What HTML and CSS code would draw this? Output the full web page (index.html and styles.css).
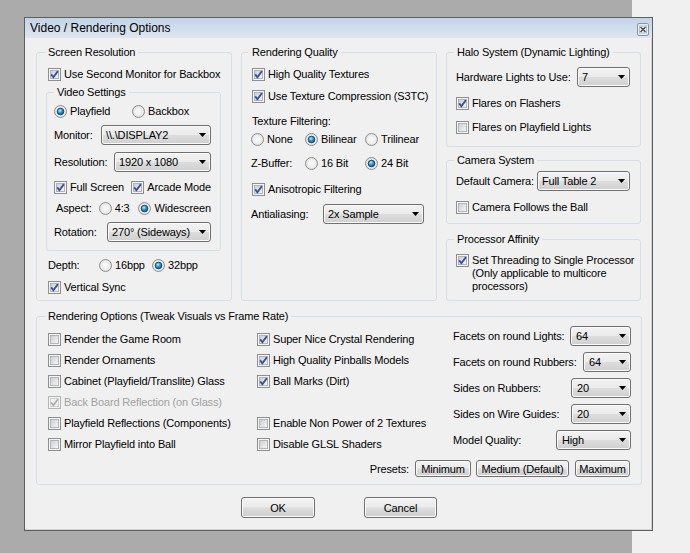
FILE: index.html
```html
<!DOCTYPE html>
<html>
<head>
<meta charset="utf-8">
<title>Video / Rendering Options</title>
<link rel="stylesheet" href="styles.css">
</head>
<body>
<svg class="defs" aria-hidden="true"><defs>
<linearGradient id="cbIn" x1="0" y1="0" x2="1" y2="1"><stop offset="0" stop-color="#c9ccd0"/><stop offset="1" stop-color="#f8f8f8"/></linearGradient>
<radialGradient id="rbIn" cx=".5" cy=".5" r=".6"><stop offset="0" stop-color="#fbfbfb"/><stop offset=".6" stop-color="#ececec"/><stop offset="1" stop-color="#c9cbce"/></radialGradient>
<radialGradient id="rbDot" cx=".4" cy=".35" r=".7"><stop offset="0" stop-color="#b5f0ff"/><stop offset=".45" stop-color="#2ba3e6"/><stop offset="1" stop-color="#0a4a86"/></radialGradient>
</defs></svg>
<div class="desktop">
  <div class="desk-gray"></div>
  <div class="desk-light"></div>
  <div class="dialog">
    <div class="titlebar">
      <span class="title">Video / Rendering Options</span>
      <svg class="close" viewBox="0 0 12 13"><rect x=".5" y=".5" width="11" height="12" rx="1.5" fill="#e8edf3" stroke="#8994a3"/><rect x="2.5" y="3" width="7" height="7" fill="#f4f6f9" stroke="#b3bcc7"/><path d="M3.5 4 8.5 9M8.5 4 3.5 9" stroke="#3e4754" stroke-width="1.4"/></svg>
    </div>
    <div class="client">
      <div class="top">
        <div class="group screen">
          <span class="legend">Screen Resolution</span>
          <label class="opt"><svg class="cb" viewBox="0 0 13 13"><rect x=".5" y=".5" width="12" height="12" fill="#f6f6f6" stroke="#8e8f8f"/><rect x="2.5" y="2.5" width="8" height="8" fill="url(#cbIn)" stroke="#b1b5b9"/><path d="M3.2 6.4 5.4 9.3 9.9 3.1" fill="none" stroke="#34529e" stroke-width="1.8"/></svg><span>Use Second Monitor for Backbox</span></label>
          <div class="group sub">
            <span class="legend">Video Settings</span>
            <div class="row">
              <label class="opt w78"><svg class="rb" viewBox="0 0 13 13"><circle cx="6.5" cy="6.5" r="6" fill="url(#rbIn)" stroke="#8e8f8f"/><circle cx="6.5" cy="6.5" r="3.3" fill="url(#rbDot)" stroke="#15395f" stroke-width=".9"/></svg><span>Playfield</span></label>
              <label class="opt"><svg class="rb" viewBox="0 0 13 13"><circle cx="6.5" cy="6.5" r="6" fill="url(#rbIn)" stroke="#8e8f8f"/></svg><span>Backbox</span></label>
            </div>
            <div class="row crow mt7"><span>Monitor:</span><div class="combo w110"><span>\\.\DISPLAY2</span><i class="arrow"></i></div></div>
            <div class="row crow mt7"><span>Resolution:</span><div class="combo w97"><span>1920 x 1080</span><i class="arrow"></i></div></div>
            <div class="row mt8">
              <label class="opt w78"><svg class="cb" viewBox="0 0 13 13"><rect x=".5" y=".5" width="12" height="12" fill="#f6f6f6" stroke="#8e8f8f"/><rect x="2.5" y="2.5" width="8" height="8" fill="url(#cbIn)" stroke="#b1b5b9"/><path d="M3.2 6.4 5.4 9.3 9.9 3.1" fill="none" stroke="#34529e" stroke-width="1.8"/></svg><span>Full Screen</span></label>
              <label class="opt"><svg class="cb" viewBox="0 0 13 13"><rect x=".5" y=".5" width="12" height="12" fill="#f6f6f6" stroke="#8e8f8f"/><rect x="2.5" y="2.5" width="8" height="8" fill="url(#cbIn)" stroke="#b1b5b9"/><path d="M3.2 6.4 5.4 9.3 9.9 3.1" fill="none" stroke="#34529e" stroke-width="1.8"/></svg><span>Arcade Mode</span></label>
            </div>
            <div class="row mt7 ml2">
              <span class="w43">Aspect:</span>
              <label class="opt w40"><svg class="rb" viewBox="0 0 13 13"><circle cx="6.5" cy="6.5" r="6" fill="url(#rbIn)" stroke="#8e8f8f"/></svg><span>4:3</span></label>
              <label class="opt"><svg class="rb" viewBox="0 0 13 13"><circle cx="6.5" cy="6.5" r="6" fill="url(#rbIn)" stroke="#8e8f8f"/><circle cx="6.5" cy="6.5" r="3.3" fill="url(#rbDot)" stroke="#15395f" stroke-width=".9"/></svg><span>Widescreen</span></label>
            </div>
            <div class="row crow mt7"><span>Rotation:</span><div class="combo w104"><span>270° (Sideways)</span><i class="arrow"></i></div></div>
          </div>
          <div class="row mt7">
            <span class="w51">Depth:</span>
            <label class="opt w53"><svg class="rb" viewBox="0 0 13 13"><circle cx="6.5" cy="6.5" r="6" fill="url(#rbIn)" stroke="#8e8f8f"/></svg><span>16bpp</span></label>
            <label class="opt"><svg class="rb" viewBox="0 0 13 13"><circle cx="6.5" cy="6.5" r="6" fill="url(#rbIn)" stroke="#8e8f8f"/><circle cx="6.5" cy="6.5" r="3.3" fill="url(#rbDot)" stroke="#15395f" stroke-width=".9"/></svg><span>32bpp</span></label>
          </div>
          <label class="opt mt8"><svg class="cb" viewBox="0 0 13 13"><rect x=".5" y=".5" width="12" height="12" fill="#f6f6f6" stroke="#8e8f8f"/><rect x="2.5" y="2.5" width="8" height="8" fill="url(#cbIn)" stroke="#b1b5b9"/><path d="M3.2 6.4 5.4 9.3 9.9 3.1" fill="none" stroke="#34529e" stroke-width="1.8"/></svg><span>Vertical Sync</span></label>
        </div>

        <div class="group quality">
          <span class="legend">Rendering Quality</span>
          <label class="opt"><svg class="cb" viewBox="0 0 13 13"><rect x=".5" y=".5" width="12" height="12" fill="#f6f6f6" stroke="#8e8f8f"/><rect x="2.5" y="2.5" width="8" height="8" fill="url(#cbIn)" stroke="#b1b5b9"/><path d="M3.2 6.4 5.4 9.3 9.9 3.1" fill="none" stroke="#34529e" stroke-width="1.8"/></svg><span>High Quality Textures</span></label>
          <label class="opt mt8"><svg class="cb" viewBox="0 0 13 13"><rect x=".5" y=".5" width="12" height="12" fill="#f6f6f6" stroke="#8e8f8f"/><rect x="2.5" y="2.5" width="8" height="8" fill="url(#cbIn)" stroke="#b1b5b9"/><path d="M3.2 6.4 5.4 9.3 9.9 3.1" fill="none" stroke="#34529e" stroke-width="1.8"/></svg><span>Use Texture Compression (S3TC)</span></label>
          <div class="row mt11">Texture Filtering:</div>
          <div class="row mt4 ml-1">
            <label class="opt w54"><svg class="rb" viewBox="0 0 13 13"><circle cx="6.5" cy="6.5" r="6" fill="url(#rbIn)" stroke="#8e8f8f"/></svg><span>None</span></label>
            <label class="opt w60"><svg class="rb" viewBox="0 0 13 13"><circle cx="6.5" cy="6.5" r="6" fill="url(#rbIn)" stroke="#8e8f8f"/><circle cx="6.5" cy="6.5" r="3.3" fill="url(#rbDot)" stroke="#15395f" stroke-width=".9"/></svg><span>Bilinear</span></label>
            <label class="opt"><svg class="rb" viewBox="0 0 13 13"><circle cx="6.5" cy="6.5" r="6" fill="url(#rbIn)" stroke="#8e8f8f"/></svg><span>Trilinear</span></label>
          </div>
          <div class="row mt10 ml-1">
            <span class="w54">Z-Buffer:</span>
            <label class="opt w60"><svg class="rb" viewBox="0 0 13 13"><circle cx="6.5" cy="6.5" r="6" fill="url(#rbIn)" stroke="#8e8f8f"/></svg><span>16 Bit</span></label>
            <label class="opt"><svg class="rb" viewBox="0 0 13 13"><circle cx="6.5" cy="6.5" r="6" fill="url(#rbIn)" stroke="#8e8f8f"/><circle cx="6.5" cy="6.5" r="3.3" fill="url(#rbDot)" stroke="#15395f" stroke-width=".9"/></svg><span>24 Bit</span></label>
          </div>
          <label class="opt mt12"><svg class="cb" viewBox="0 0 13 13"><rect x=".5" y=".5" width="12" height="12" fill="#f6f6f6" stroke="#8e8f8f"/><rect x="2.5" y="2.5" width="8" height="8" fill="url(#cbIn)" stroke="#b1b5b9"/><path d="M3.2 6.4 5.4 9.3 9.9 3.1" fill="none" stroke="#34529e" stroke-width="1.8"/></svg><span>Anisotropic Filtering</span></label>
          <div class="row crow mt8 ml-1"><span class="w72">Antialiasing:</span><div class="combo fixed w101"><span>2x Sample</span><i class="arrow"></i></div></div>
        </div>

        <div class="rightcol">
          <div class="group halo">
            <span class="legend">Halo System (Dynamic Lighting)</span>
            <div class="row crow"><span>Hardware Lights to Use:</span><div class="combo w53"><span>7</span><i class="arrow"></i></div></div>
            <label class="opt mt9"><svg class="cb" viewBox="0 0 13 13"><rect x=".5" y=".5" width="12" height="12" fill="#f6f6f6" stroke="#8e8f8f"/><rect x="2.5" y="2.5" width="8" height="8" fill="url(#cbIn)" stroke="#b1b5b9"/><path d="M3.2 6.4 5.4 9.3 9.9 3.1" fill="none" stroke="#34529e" stroke-width="1.8"/></svg><span>Flares on Flashers</span></label>
            <label class="opt mt10"><svg class="cb" viewBox="0 0 13 13"><rect x=".5" y=".5" width="12" height="12" fill="#f6f6f6" stroke="#8e8f8f"/><rect x="2.5" y="2.5" width="8" height="8" fill="url(#cbIn)" stroke="#b1b5b9"/></svg><span>Flares on Playfield Lights</span></label>
          </div>
          <div class="group camera">
            <span class="legend">Camera System</span>
            <div class="row crow"><span>Default Camera:</span><div class="combo w93"><span>Full Table 2</span><i class="arrow"></i></div></div>
            <label class="opt mt9"><svg class="cb" viewBox="0 0 13 13"><rect x=".5" y=".5" width="12" height="12" fill="#f6f6f6" stroke="#8e8f8f"/><rect x="2.5" y="2.5" width="8" height="8" fill="url(#cbIn)" stroke="#b1b5b9"/></svg><span>Camera Follows the Ball</span></label>
          </div>
          <div class="group proc">
            <span class="legend">Processor Affinity</span>
            <label class="opt multi"><svg class="cb" viewBox="0 0 13 13"><rect x=".5" y=".5" width="12" height="12" fill="#f6f6f6" stroke="#8e8f8f"/><rect x="2.5" y="2.5" width="8" height="8" fill="url(#cbIn)" stroke="#b1b5b9"/><path d="M3.2 6.4 5.4 9.3 9.9 3.1" fill="none" stroke="#34529e" stroke-width="1.8"/></svg><span>Set Threading to Single Processor<br>(Only applicable to multicore<br>processors)</span></label>
          </div>
        </div>
      </div>

      <div class="group renderopts">
        <span class="legend">Rendering Options (Tweak Visuals vs Frame Rate)</span>
        <div class="ro-grid">
          <div class="ro-col">
            <label class="opt"><svg class="cb" viewBox="0 0 13 13"><rect x=".5" y=".5" width="12" height="12" fill="#f6f6f6" stroke="#8e8f8f"/><rect x="2.5" y="2.5" width="8" height="8" fill="url(#cbIn)" stroke="#b1b5b9"/></svg><span>Render the Game Room</span></label>
            <label class="opt"><svg class="cb" viewBox="0 0 13 13"><rect x=".5" y=".5" width="12" height="12" fill="#f6f6f6" stroke="#8e8f8f"/><rect x="2.5" y="2.5" width="8" height="8" fill="url(#cbIn)" stroke="#b1b5b9"/></svg><span>Render Ornaments</span></label>
            <label class="opt"><svg class="cb" viewBox="0 0 13 13"><rect x=".5" y=".5" width="12" height="12" fill="#f6f6f6" stroke="#8e8f8f"/><rect x="2.5" y="2.5" width="8" height="8" fill="url(#cbIn)" stroke="#b1b5b9"/></svg><span>Cabinet (Playfield/Translite) Glass</span></label>
            <label class="opt disabled"><svg class="cb" viewBox="0 0 13 13"><rect x=".5" y=".5" width="12" height="12" fill="#f4f4f4" stroke="#b5b5b5"/><rect x="2.5" y="2.5" width="8" height="8" fill="#f0f0f0" stroke="#d2d2d2"/><path d="M3.2 6.4 5.4 9.3 9.9 3.1" fill="none" stroke="#a9a9a9" stroke-width="1.6"/></svg><span>Back Board Reflection (on Glass)</span></label>
            <label class="opt"><svg class="cb" viewBox="0 0 13 13"><rect x=".5" y=".5" width="12" height="12" fill="#f6f6f6" stroke="#8e8f8f"/><rect x="2.5" y="2.5" width="8" height="8" fill="url(#cbIn)" stroke="#b1b5b9"/></svg><span>Playfield Reflections (Components)</span></label>
            <label class="opt"><svg class="cb" viewBox="0 0 13 13"><rect x=".5" y=".5" width="12" height="12" fill="#f6f6f6" stroke="#8e8f8f"/><rect x="2.5" y="2.5" width="8" height="8" fill="url(#cbIn)" stroke="#b1b5b9"/></svg><span>Mirror Playfield into Ball</span></label>
          </div>
          <div class="ro-col">
            <label class="opt"><svg class="cb" viewBox="0 0 13 13"><rect x=".5" y=".5" width="12" height="12" fill="#f6f6f6" stroke="#8e8f8f"/><rect x="2.5" y="2.5" width="8" height="8" fill="url(#cbIn)" stroke="#b1b5b9"/><path d="M3.2 6.4 5.4 9.3 9.9 3.1" fill="none" stroke="#34529e" stroke-width="1.8"/></svg><span>Super Nice Crystal Rendering</span></label>
            <label class="opt"><svg class="cb" viewBox="0 0 13 13"><rect x=".5" y=".5" width="12" height="12" fill="#f6f6f6" stroke="#8e8f8f"/><rect x="2.5" y="2.5" width="8" height="8" fill="url(#cbIn)" stroke="#b1b5b9"/><path d="M3.2 6.4 5.4 9.3 9.9 3.1" fill="none" stroke="#34529e" stroke-width="1.8"/></svg><span>High Quality Pinballs Models</span></label>
            <label class="opt"><svg class="cb" viewBox="0 0 13 13"><rect x=".5" y=".5" width="12" height="12" fill="#f6f6f6" stroke="#8e8f8f"/><rect x="2.5" y="2.5" width="8" height="8" fill="url(#cbIn)" stroke="#b1b5b9"/><path d="M3.2 6.4 5.4 9.3 9.9 3.1" fill="none" stroke="#34529e" stroke-width="1.8"/></svg><span>Ball Marks (Dirt)</span></label>
            <div class="opt"></div>
            <label class="opt"><svg class="cb" viewBox="0 0 13 13"><rect x=".5" y=".5" width="12" height="12" fill="#f6f6f6" stroke="#8e8f8f"/><rect x="2.5" y="2.5" width="8" height="8" fill="url(#cbIn)" stroke="#b1b5b9"/></svg><span>Enable Non Power of 2 Textures</span></label>
            <label class="opt"><svg class="cb" viewBox="0 0 13 13"><rect x=".5" y=".5" width="12" height="12" fill="#f6f6f6" stroke="#8e8f8f"/><rect x="2.5" y="2.5" width="8" height="8" fill="url(#cbIn)" stroke="#b1b5b9"/></svg><span>Disable GLSL Shaders</span></label>
          </div>
          <div class="ro-combos">
            <div class="row crow"><span>Facets on round Lights:</span><div class="combo w61 pl5"><span>64</span><i class="arrow"></i></div></div>
            <div class="row crow"><span>Facets on round Rubbers:</span><div class="combo w48 pl5"><span>64</span><i class="arrow"></i></div></div>
            <div class="row crow"><span>Sides on Rubbers:</span><div class="combo w60 pl5"><span>20</span><i class="arrow"></i></div></div>
            <div class="row crow"><span>Sides on Wire Guides:</span><div class="combo w60 pl5"><span>20</span><i class="arrow"></i></div></div>
            <div class="row crow"><span>Model Quality:</span><div class="combo w75 pl5"><span>High</span><i class="arrow"></i></div></div>
          </div>
        </div>
        <div class="presets">
          <span class="plabel">Presets:</span>
          <button class="btn pbtn w56">Minimum</button>
          <button class="btn pbtn w93 ml5">Medium (Default)</button>
          <button class="btn pbtn w55 ml6">Maximum</button>
        </div>
      </div>

      <div class="buttons">
        <button class="btn w74">OK</button>
        <button class="btn w73">Cancel</button>
      </div>
    </div>
  </div>
</div>
</body>
</html>
```

FILE: styles.css
```css
* { box-sizing: border-box; }
html, body { margin: 0; padding: 0; }
body {
  width: 690px;
  height: 553px;
  overflow: hidden;
  font-family: "Liberation Sans", Arial, sans-serif;
  font-size: 11px;
  line-height: 14px;
  letter-spacing: -0.15px;
  color: #000;
}
.defs { position: absolute; width: 0; height: 0; overflow: hidden; }

.desktop { position: relative; display: flex; width: 690px; height: 553px; }
.desk-gray { width: 632px; background: #ababab; }
.desk-light { flex: 1; background: #f0f0f0; }

.dialog {
  position: absolute;
  left: 24px;
  top: 17px;
  width: 629px;
  height: 514px;
  border: 1px solid #5f5f5f;
  background: #f0f0f0;
  box-shadow: inset -1px -1px 0 #d4d4d4;
}
.titlebar {
  height: 20px;
  display: flex;
  align-items: flex-start;
  padding-left: 5px;
  background: linear-gradient(#c3d3e6, #d3dfec 60%, #dee7f1);
}
.title { font-size: 12px; line-height: 20px; letter-spacing: 0; }
.close { width: 12px; height: 13px; margin: 5px 3px 0 auto; flex: none; }

.client { padding: 14px 10px 0 11px; }

.top {
  display: grid;
  grid-template-columns: 196px 196px 195px;
  column-gap: 9px;
  height: 249px;
}
.group {
  position: relative;
  border: 1px solid #d5dfe5;
  border-radius: 3px;
}
.legend {
  position: absolute;
  top: -7px;
  left: 7px;
  padding: 0 3px;
  background: #f0f0f0;
  line-height: 13px;
  white-space: nowrap;
}
.screen { padding: 14px 10px 0 11px; }
.screen > .legend { left: 8px; }
.sub { margin: 11px 0 0 -2px; width: 175px; height: 159px; padding: 11px 9px 0 7px; }
.quality { padding: 14px 10px 0 10px; }
.rightcol { display: flex; flex-direction: column; }
.halo { height: 95px; padding: 14px 10px 0 9px; }
.camera { height: 64px; margin-top: 13px; padding: 10px 10px 0 9px; }
.proc { height: 62px; margin-top: 15px; padding: 14px 2px 0 9px; }

.renderopts { margin-top: 15px; height: 169px; padding: 9px 10px 0 11px; }
.renderopts > .legend { left: 8px; }
.ro-grid { display: grid; grid-template-columns: 209px 196px 1fr; }
.ro-col { display: flex; flex-direction: column; gap: 7px; margin-top: 6px; }
.ro-combos { display: flex; flex-direction: column; gap: 6px; }
.presets { display: flex; justify-content: flex-end; align-items: center; margin-top: 9px; margin-right: 1px; }
.plabel { margin-right: 6px; }

.buttons { display: flex; justify-content: center; gap: 49px; margin-top: 12px; }

.row { display: flex; align-items: center; height: 14px; white-space: nowrap; }
.crow { height: 20px; }
.opt { display: flex; align-items: center; gap: 3px; height: 14px; white-space: nowrap; }
.opt.multi { align-items: flex-start; height: auto; line-height: 13px; }
.disabled { color: #a2a2a2; }
.cb, .rb { width: 13px; height: 13px; flex: none; display: block; }

.combo {
  height: 20px;
  margin-left: auto;
  display: flex;
  align-items: center;
  padding: 0 4px 0 4px;
  border: 1px solid #707070;
  border-radius: 3px;
  background: linear-gradient(#f2f2f2 0%, #ebebeb 48%, #dddddd 52%, #cfcfcf 100%);
  box-shadow: inset 0 0 0 1px #fafafa;
  flex: none;
  white-space: nowrap;
}
.combo.fixed { margin-left: 0; }
.combo.pl5 { padding-left: 5px; }
.arrow {
  display: block;
  width: 7px;
  height: 4px;
  margin-left: auto;
  background: #000;
  clip-path: polygon(0 0, 100% 0, 50% 100%);
  flex: none;
}

.btn {
  font: inherit;
  letter-spacing: inherit;
  color: #000;
  height: 21px;
  padding: 0;
  border: 1px solid #707070;
  border-radius: 3px;
  background: linear-gradient(#f2f2f2 0%, #ebebeb 48%, #dddddd 52%, #cfcfcf 100%);
  box-shadow: inset 0 0 0 1px #fbfbfb;
  display: flex;
  align-items: center;
  justify-content: center;
}
.pbtn { height: 17px; }

.mt4 { margin-top: 4px; }
.mt7 { margin-top: 7px; }
.mt8 { margin-top: 8px; }
.mt9 { margin-top: 9px; }
.mt10 { margin-top: 10px; }
.mt11 { margin-top: 11px; }
.mt12 { margin-top: 12px; }
.ml2 { margin-left: 2px; }
.ml-1 { margin-left: -1px; }
.ml5 { margin-left: 5px; }
.ml6 { margin-left: 6px; }

.w40 { width: 40px; }
.w43 { width: 43px; }
.w48 { width: 48px; }
.w51 { width: 51px; }
.w53 { width: 53px; }
.w54 { width: 54px; }
.w55 { width: 55px; }
.w56 { width: 56px; }
.w60 { width: 60px; }
.w61 { width: 61px; }
.w72 { width: 72px; }
.w73 { width: 73px; }
.w74 { width: 74px; }
.w75 { width: 75px; }
.w78 { width: 78px; }
.w93 { width: 93px; }
.w97 { width: 97px; }
.w101 { width: 101px; }
.w104 { width: 104px; }
.w110 { width: 110px; }
```
